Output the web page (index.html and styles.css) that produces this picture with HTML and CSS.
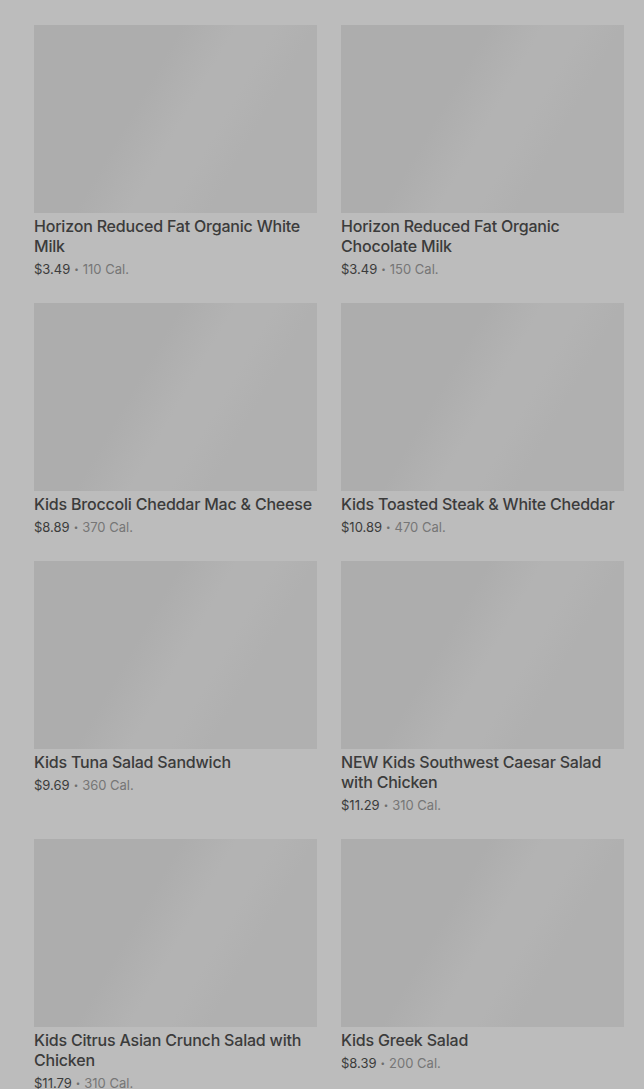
FILE: index.html
```
<!DOCTYPE html>
<html lang="en">
<head>
<meta charset="utf-8">
<title>Menu</title>
<link rel="stylesheet" href="styles.css">
</head>
<body>
<div class="page">
  <ul class="grid">
    <li class="item">
      <div class="thumb"></div>
      <div class="title">Horizon Reduced Fat Organic White Milk</div>
      <div class="meta"><span class="price">$3.49</span><span class="dot">•</span><span class="cal">110 Cal.</span></div>
    </li>
    <li class="item">
      <div class="thumb"></div>
      <div class="title">Horizon Reduced Fat Organic Chocolate Milk</div>
      <div class="meta"><span class="price">$3.49</span><span class="dot">•</span><span class="cal">150 Cal.</span></div>
    </li>
    <li class="item">
      <div class="thumb"></div>
      <div class="title">Kids Broccoli Cheddar Mac &amp; Cheese</div>
      <div class="meta"><span class="price">$8.89</span><span class="dot">•</span><span class="cal">370 Cal.</span></div>
    </li>
    <li class="item">
      <div class="thumb"></div>
      <div class="title">Kids Toasted Steak &amp; White Cheddar</div>
      <div class="meta"><span class="price">$10.89</span><span class="dot">•</span><span class="cal">470 Cal.</span></div>
    </li>
    <li class="item">
      <div class="thumb"></div>
      <div class="title">Kids Tuna Salad Sandwich</div>
      <div class="meta"><span class="price">$9.69</span><span class="dot">•</span><span class="cal">360 Cal.</span></div>
    </li>
    <li class="item">
      <div class="thumb"></div>
      <div class="title">NEW Kids Southwest Caesar Salad with Chicken</div>
      <div class="meta"><span class="price">$11.29</span><span class="dot">•</span><span class="cal">310 Cal.</span></div>
    </li>
    <li class="item">
      <div class="thumb"></div>
      <div class="title">Kids Citrus Asian Crunch Salad with Chicken</div>
      <div class="meta"><span class="price">$11.79</span><span class="dot">•</span><span class="cal">310 Cal.</span></div>
    </li>
    <li class="item">
      <div class="thumb"></div>
      <div class="title">Kids Greek Salad</div>
      <div class="meta"><span class="price">$8.39</span><span class="dot">•</span><span class="cal">200 Cal.</span></div>
    </li>
  </ul>
</div>
</body>
</html>
```
FILE: styles.css
```
html, body {
  margin: 0;
  padding: 0;
  background: #bcbcbc;
  height: 100%;
  overflow: hidden;
}
body {
  font-family: Inter, "Noto Sans", sans-serif;
  color: #3a3a3a;
}
.page {
  padding: 25px 20px 0 34px;
}
.grid {
  list-style: none;
  margin: 0;
  padding: 0;
  display: grid;
  grid-template-columns: 283px 283px;
  column-gap: 24px;
  row-gap: 24px;
}
.item {
  display: flex;
  flex-direction: column;
}
.thumb {
  height: 188px;
  background: linear-gradient(120deg, #adadad 0%, #adadad 38%, #b3b3b3 52%, #b3b3b3 62%, #b0b0b0 72%, #b0b0b0 100%);
}
.title {
  margin-top: 3px;
  font-size: 16px;
  line-height: 20px;
  font-weight: 500;
  letter-spacing: -0.2px;
  color: #3b3b3b;
}
.meta {
  margin-top: 3px;
  font-size: 13px;
  line-height: 20px;
  display: flex;
  align-items: center;
}
.price {
  color: #3b3b3b;
}
.dot {
  color: #6e6e6e;
  font-size: 8px;
  margin: 0 4px;
}
.cal {
  color: #767676;
}
```
